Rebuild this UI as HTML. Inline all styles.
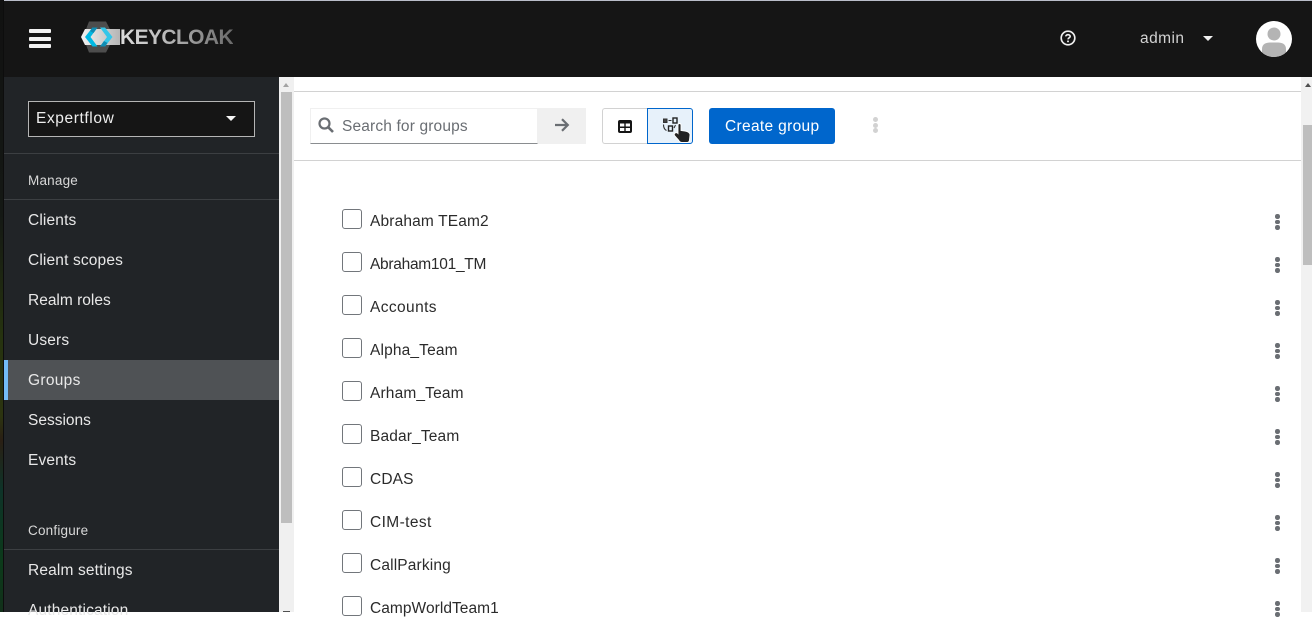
<!DOCTYPE html>
<html><head><meta charset="utf-8">
<style>
*{box-sizing:border-box}
html,body{margin:0;padding:0;width:1312px;height:612px;overflow:hidden;background:#fff;font-family:"Liberation Sans",sans-serif}
.a{position:absolute}
.t{position:absolute;white-space:nowrap;font-size:15.5px;line-height:20px;letter-spacing:.15px}
.nav{color:#e8e8e8;left:28px}
.hr{position:absolute;left:4px;width:275px;height:1px;background:#3c3f42}
.cb{position:absolute;left:342px;width:20px;height:20px;border:1px solid #72767b;border-radius:3px;background:#fff}
.name{left:370px;color:#2b2b2b}
.k{position:absolute;left:1275px;width:4.5px;height:15px}
.k i{position:absolute;left:0;width:4.5px;height:4.5px;border-radius:50%;background:#6a6e73}
.k i:nth-child(1){top:0}.k i:nth-child(2){top:5.5px}.k i:nth-child(3){top:11px}
</style></head>
<body>
<!-- left strip -->
<div class="a" style="left:0;top:0;width:4px;height:612px;background:linear-gradient(180deg,#111 0,#141814 35%,#26330f 55%,#2c3410 68%,#2a1f14 72%,#0e3328 80%,#0c3a1a 92%,#12301a 100%)"></div>
<div class="a" style="left:3px;top:0;width:1px;height:612px;background:#0d0d0d"></div>
<!-- header -->
<div class="a" style="left:4px;top:0;width:1308px;height:77px;background:#151515"></div>
<div class="a" style="left:4px;top:0;width:1308px;height:1px;background:#b9bdc9"></div>
<!-- hamburger -->
<div class="a" style="left:29px;top:29px;width:22px;height:4px;background:#f2f2f2;border-radius:1px"></div>
<div class="a" style="left:29px;top:36.500px;width:22px;height:4px;background:#f2f2f2;border-radius:1px"></div>
<div class="a" style="left:29px;top:44px;width:22px;height:4px;background:#f2f2f2;border-radius:1px"></div>
<!-- logo -->
<svg class="a" style="left:78px;top:20px" width="46" height="34" viewBox="0 0 46 34">
<defs><linearGradient id="g" x1="0" x2="1" y1="0" y2="0"><stop offset="0" stop-color="#f2f2f2"/><stop offset="1" stop-color="#b5b5b5"/></linearGradient></defs>
<polygon points="11,1.500 28,1.500 36,17 28,32.500 11,32.500 5,17" fill="#4d4d4d"/>
<polygon points="7,9 42,9 42,25 7,25 3,17" fill="url(#g)"/>
<path d="M14.500 7.500 L7 17 L14.500 26.500 H19.500 L12.500 17 L19.500 7.500Z" fill="#00b8e3"/>
<path d="M27 7.500 L34.500 17 L27 26.500 H22 L29 17 L22 7.500Z" fill="#33c6e9"/>
<path d="M14.500 7.500 L19.500 7.500 L15.500 13 L12 11Z" fill="#0f8cb3"/>
<path d="M27 26.500 L22 26.500 L26 21 L29.500 23Z" fill="#0f8cb3"/>
</svg>
<div class="a" style="left:120px;top:25px;font-size:21px;line-height:26px;font-weight:bold;letter-spacing:-.6px;white-space:nowrap;background:linear-gradient(90deg,#dcdcdc,#c0c0c0 35%,#6a6a6a);-webkit-background-clip:text;background-clip:text;color:transparent">KEYCLOAK</div>
<!-- help -->
<svg class="a" style="left:1060px;top:30px" width="16" height="16" viewBox="0 0 16 16" fill="none">
<circle cx="8" cy="8" r="6.800" stroke="#f0f0f0" stroke-width="1.700"/>
<path d="M5.800 6.400 C5.800 4.100 10.200 4.100 10.200 6.400 C10.200 7.900 8 7.700 8 9.400" stroke="#f0f0f0" stroke-width="1.600"/>
<circle cx="8" cy="11.400" r="1" fill="#f0f0f0"/>
</svg>
<div class="t" style="left:1140px;top:29px;color:#d2d2d2;letter-spacing:.45px">admin</div>
<div class="a" style="left:1203px;top:36px;width:0;height:0;border-left:5px solid transparent;border-right:5px solid transparent;border-top:5px solid #f0f0f0"></div>
<!-- avatar -->
<svg class="a" style="left:1256px;top:21px" width="36" height="36" viewBox="0 0 36 36">
<defs><clipPath id="c"><circle cx="18" cy="18" r="18"/></clipPath></defs>
<circle cx="18" cy="18" r="18" fill="#fff"/>
<g clip-path="url(#c)"><circle cx="18" cy="13" r="6.500" fill="#b4b4b4"/><path d="M6 36 V28 C6 23 10 21.500 14 21.500 H22 C26 21.500 30 23 30 28 V36Z" fill="#b4b4b4"/></g>
</svg>
<!-- sidebar -->
<div class="a" style="left:4px;top:77px;width:275px;height:535px;background:#212427"></div>
<div class="a" style="left:28px;top:101px;width:227px;height:36px;background:#151515;border:1px solid #b5b5b5"></div>
<div class="t" style="left:36px;top:109px;color:#eee;letter-spacing:.6px">Expertflow</div>
<div class="a" style="left:226px;top:116px;width:0;height:0;border-left:5px solid transparent;border-right:5px solid transparent;border-top:5px solid #f5f5f5"></div>
<div class="hr" style="top:153px"></div>
<div class="t nav" style="top:171px;font-size:13.500px;letter-spacing:.2px;color:#d8d8d8">Manage</div>
<div class="hr" style="top:199px"></div>
<div class="t nav" style="top:211px">Clients</div>
<div class="t nav" style="top:251px">Client scopes</div>
<div class="t nav" style="top:291px;letter-spacing:0">Realm roles</div>
<div class="t nav" style="top:331px">Users</div>
<div class="a" style="left:4px;top:360px;width:275px;height:40px;background:#4f5255"></div>
<div class="a" style="left:4px;top:360px;width:4px;height:40px;background:#73bcf7"></div>
<div class="t nav" style="top:371px;letter-spacing:.3px">Groups</div>
<div class="t nav" style="top:411px;letter-spacing:0">Sessions</div>
<div class="t nav" style="top:451px">Events</div>
<div class="t nav" style="top:521px;font-size:13.500px;letter-spacing:.2px;color:#d8d8d8">Configure</div>
<div class="hr" style="top:549px"></div>
<div class="t nav" style="top:561px">Realm settings</div>
<div class="t nav" style="top:601px">Authentication</div>
<!-- sidebar scrollbar -->
<div class="a" style="left:279px;top:77px;width:15px;height:535px;background:#f0f0f0"></div>
<div class="a" style="left:281px;top:92px;width:11px;height:431px;background:#bebebe"></div>
<div class="a" style="left:283px;top:83px;width:0;height:0;border-left:3.500px solid transparent;border-right:3.500px solid transparent;border-top:0;border-bottom:4px solid #a3a3a3"></div>
<div class="a" style="left:283px;top:611px;width:7px;height:1px;background:#505050"></div>
<!-- main scrollbar -->
<div class="a" style="left:1301px;top:77px;width:11px;height:535px;background:#f1f1f1"></div>
<div class="a" style="left:1303px;top:125px;width:9px;height:140px;background:#bebebe"></div>
<div class="a" style="left:1305px;top:83px;width:0;height:0;border-left:3.500px solid transparent;border-right:3.500px solid transparent;border-bottom:4px solid #505050"></div>
<!-- toolbar -->
<div class="a" style="left:294px;top:91px;width:1007px;height:1px;background:#d2d2d2"></div>
<div class="a" style="left:294px;top:160px;width:1007px;height:1px;background:#d2d2d2"></div>
<div class="a" style="left:310px;top:108px;width:228px;height:36px;background:#fff;border:1px solid #f0f0f0;border-bottom:1px solid #8a8d90"></div>
<svg class="a" style="left:318px;top:117px" width="16" height="16" viewBox="0 0 16 16" fill="none">
<circle cx="6.500" cy="6.500" r="5" stroke="#6a6e73" stroke-width="2.200"/>
<path d="M10.300 10.300 L15 15" stroke="#6a6e73" stroke-width="2.600"/>
</svg>
<div class="t" style="left:342px;top:117px;color:#6a6e73">Search for groups</div>
<div class="a" style="left:538px;top:108px;width:48px;height:36px;background:#f0f0f0"></div>
<svg class="a" style="left:554px;top:117px" width="16" height="16" viewBox="0 0 16 16" fill="none">
<path d="M1 8 H13.500 M8 2.200 L13.800 8 L8 13.800" stroke="#6a6e73" stroke-width="2.200"/>
</svg>
<!-- toggle -->
<div class="a" style="left:602px;top:108px;width:46px;height:36px;background:#fff;border:1px solid #d2d2d2;border-right:0;border-radius:3px 0 0 3px"></div>
<svg class="a" style="left:618px;top:120px" width="14" height="13" viewBox="0 0 14 13">
<rect width="14" height="13" rx="2" fill="#151515"/>
<rect x="2" y="3.500" width="4.300" height="3" fill="#fff"/><rect x="7.700" y="3.500" width="4.300" height="3" fill="#fff"/>
<rect x="2" y="8" width="4.300" height="3" fill="#fff"/><rect x="7.700" y="8" width="4.300" height="3" fill="#fff"/>
</svg>
<div class="a" style="left:647px;top:108px;width:46px;height:36px;background:#e7f1fa;border:1px solid #06c;border-radius:0 3px 3px 0"></div>
<svg class="a" style="left:661px;top:116px" width="32" height="28" viewBox="0 0 32 28" fill="none">
<rect x="2.500" y="3" width="3.500" height="3.500" fill="#444" stroke="#333" stroke-width="1"/>
<rect x="12" y="2" width="4" height="5" stroke="#222" stroke-width="1.400"/>
<rect x="7.500" y="10" width="4" height="5" stroke="#222" stroke-width="1.400"/>
<path d="M7.500 4.500 H10.500 M2.500 8.500 C2.500 11.500 3.500 13.500 5.500 14.500 M14.500 9 L13 12" stroke="#333" stroke-width="1.100"/>
<path d="M17 9 C17 7 20 7 20 9 V14.500 L24 15 C27 15.500 29 16.500 29 19 L28.500 23.500 C28.500 25.500 27.500 26.500 26 26.500 H21 C19 26.500 18.500 25.500 17.500 24 L13.500 19.500 C12.500 17.500 15 15.500 17 17.500Z" fill="#222" stroke="#fff" stroke-width=".9"/>
</svg>
<!-- create -->
<div class="a" style="left:709px;top:108px;width:126px;height:36px;background:#06c;border-radius:3px"></div>
<div class="t" style="left:725px;top:117px;color:#fff;letter-spacing:.33px">Create group</div>
<div class="a" style="left:872px;top:117px;width:6px;height:15px">
<div class="a" style="left:.5px;top:0;width:5px;height:5px;border-radius:50%;background:#d2d2d2"></div>
<div class="a" style="left:.5px;top:5.500px;width:5px;height:5px;border-radius:50%;background:#d2d2d2"></div>
<div class="a" style="left:.5px;top:11px;width:5px;height:5px;border-radius:50%;background:#d2d2d2"></div>
</div>
<!-- rows -->
<div class="cb" style="top:209px"></div><div class="t name" style="top:212px">Abraham TEam2</div><div class="k" style="top:214px"><i></i><i></i><i></i></div>
<div class="cb" style="top:252px"></div><div class="t name" style="top:255px;letter-spacing:-.28px">Abraham101_TM</div><div class="k" style="top:257px"><i></i><i></i><i></i></div>
<div class="cb" style="top:295px"></div><div class="t name" style="top:298px;letter-spacing:.4px">Accounts</div><div class="k" style="top:300px"><i></i><i></i><i></i></div>
<div class="cb" style="top:338px"></div><div class="t name" style="top:341px">Alpha_Team</div><div class="k" style="top:343px"><i></i><i></i><i></i></div>
<div class="cb" style="top:381px"></div><div class="t name" style="top:384px">Arham_Team</div><div class="k" style="top:386px"><i></i><i></i><i></i></div>
<div class="cb" style="top:424px"></div><div class="t name" style="top:427px">Badar_Team</div><div class="k" style="top:429px"><i></i><i></i><i></i></div>
<div class="cb" style="top:467px"></div><div class="t name" style="top:470px">CDAS</div><div class="k" style="top:472px"><i></i><i></i><i></i></div>
<div class="cb" style="top:510px"></div><div class="t name" style="top:513px;letter-spacing:.4px">CIM-test</div><div class="k" style="top:515px"><i></i><i></i><i></i></div>
<div class="cb" style="top:553px"></div><div class="t name" style="top:556px">CallParking</div><div class="k" style="top:558px"><i></i><i></i><i></i></div>
<div class="cb" style="top:596px"></div><div class="t name" style="top:599px;letter-spacing:.05px">CampWorldTeam1</div><div class="k" style="top:601px"><i></i><i></i><i></i></div>
</body></html>
